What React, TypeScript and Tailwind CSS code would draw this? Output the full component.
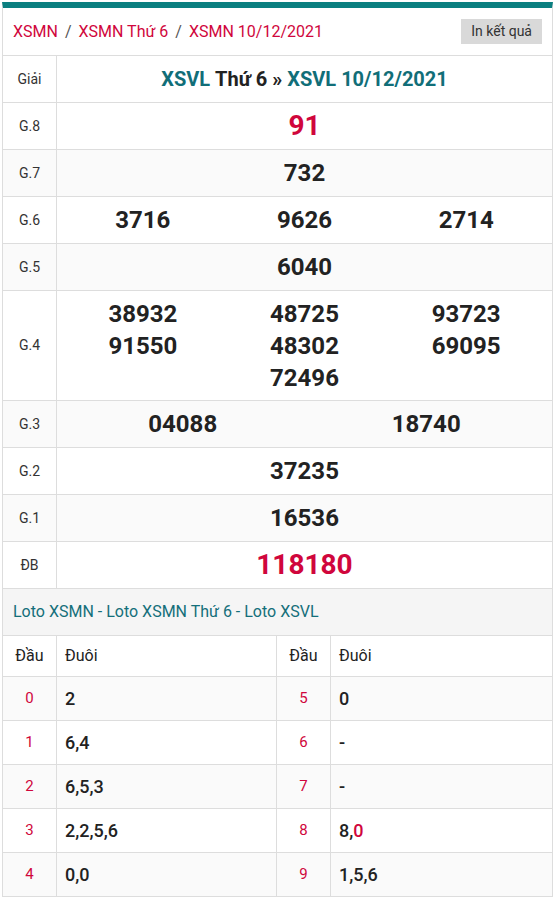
const red = "text-[#d0063c]";

type Row = { label: string; cols: number; nums: string[]; big?: boolean; bg?: boolean; h?: string };

const rows: Row[] = [
  { label: "G.8", cols: 1, nums: ["91"], big: true },
  { label: "G.7", cols: 1, nums: ["732"], bg: true },
  { label: "G.6", cols: 3, nums: ["3716", "9626", "2714"] },
  { label: "G.5", cols: 1, nums: ["6040"], bg: true },
  {
    label: "G.4",
    cols: 3,
    nums: ["38932", "48725", "93723", "91550", "48302", "69095", "", "72496", ""],
    h: "h-[110px]",
  },
  { label: "G.3", cols: 2, nums: ["04088", "18740"], bg: true },
  { label: "G.2", cols: 1, nums: ["37235"] },
  { label: "G.1", cols: 1, nums: ["16536"], bg: true },
  { label: "ĐB", cols: 1, nums: ["118180"], big: true },
];

const loto: [string, React.ReactNode, string, React.ReactNode][] = [
  ["0", "2", "5", "0"],
  ["1", "6,4", "6", "-"],
  ["2", "6,5,3", "7", "-"],
  ["3", "2,2,5,6", "8", <>8,<span className={red}>0</span></>],
  ["4", "0,0", "9", "1,5,6"],
];

function GiaiRow({ r }: { r: Row }) {
  const grid = r.cols === 3 ? "grid-cols-3 px-[5px]" : r.cols === 2 ? "grid-cols-2 px-[4px]" : "grid-cols-1";
  return (
    <div className={`flex border-b border-[#dddddd] ${r.h ?? "h-[47px]"} ${r.bg ? "bg-[#fafafa]" : "bg-white"}`}>
      <div className="w-[54px] shrink-0 border-r border-[#dddddd] flex items-center justify-center text-[14px] text-[#333]">
        {r.label}
      </div>
      <div className={`flex-1 grid ${grid} content-center`}>
        {r.nums.map((n, i) => (
          <div
            key={i}
            className={`text-center font-bold ${
              r.big ? `${red} text-[28px] leading-[32px]` : "text-[#222] text-[24px] leading-[32px]"
            }`}
          >
            {n}
          </div>
        ))}
      </div>
    </div>
  );
}

export default function App() {
  return (
    <div className="min-h-screen bg-white pt-[2px] pl-[2px]" style={{ fontFamily: "Roboto, 'Liberation Sans', sans-serif" }}>
      <div className="w-[551px] border-t-[6px] border-t-[#0b7f80] border-x border-x-[#dddddd]">
        <div className="h-[48px] flex items-center justify-between pl-[10px] pr-[10px] border-b border-[#dddddd]">
          <div className="flex items-center gap-[7px] text-[16px] pt-[1px]">
            <span className={red}>XSMN</span>
            <span className="text-[#555]">/</span>
            <span className={red}>XSMN Thứ 6</span>
            <span className="text-[#555]">/</span>
            <span className={red}>XSMN 10/12/2021</span>
          </div>
          <button className="h-[25px] px-[10px] bg-[#d9d9d9] text-[14px] text-[#333]">In kết quả</button>
        </div>

        <div className="flex h-[47px] border-b border-[#dddddd]">
          <div className="w-[54px] shrink-0 border-r border-[#dddddd] flex items-center justify-center text-[14px] text-[#333]">
            Giải
          </div>
          <div className="flex-1 flex items-center justify-center text-[20px] font-bold">
            <span className="text-[#116e78]">XSVL</span>
            <span className="text-[#222] ml-[5px]">Thứ 6 »</span>
            <span className="text-[#116e78] ml-[5px]">XSVL 10/12/2021</span>
          </div>
        </div>

        {rows.map((r) => (
          <GiaiRow key={r.label} r={r} />
        ))}

        <div className="h-[47px] flex items-center px-[10px] bg-[#f5f5f5] border-b border-[#dddddd] text-[16px] text-[#146f7a]">
          Loto XSMN - Loto XSMN Thứ 6 - Loto XSVL
        </div>

        <div className="grid grid-cols-[54px_220px_54px_1fr]">
          <div className="h-[41px] border-r border-b border-[#dddddd] flex items-center justify-center text-[16px] text-[#222]">Đầu</div>
          <div className="h-[41px] border-r border-b border-[#dddddd] flex items-center pl-[8px] text-[16px] text-[#222]">Đuôi</div>
          <div className="h-[41px] border-r border-b border-[#dddddd] flex items-center justify-center text-[16px] text-[#222]">Đầu</div>
          <div className="h-[41px] border-b border-[#dddddd] flex items-center pl-[8px] text-[16px] text-[#222]">Đuôi</div>
          {loto.map(([d1, v1, d2, v2], i) => {
            const bg = i % 2 === 0 ? "bg-[#fafafa]" : "bg-white";
            return [
              <div key={`a${i}`} className={`h-[44px] ${bg} border-r border-b border-[#dddddd] flex items-center justify-center text-[15px] ${red}`}>{d1}</div>,
              <div key={`b${i}`} className={`h-[44px] ${bg} border-r border-b border-[#dddddd] flex items-center pl-[8px] text-[18px] font-medium text-[#222]`}>{v1}</div>,
              <div key={`c${i}`} className={`h-[44px] ${bg} border-r border-b border-[#dddddd] flex items-center justify-center text-[15px] ${red}`}>{d2}</div>,
              <div key={`d${i}`} className={`h-[44px] ${bg} border-b border-[#dddddd] flex items-center pl-[8px] text-[18px] font-medium text-[#222]`}>{v2}</div>,
            ];
          })}
        </div>
      </div>
    </div>
  );
}
